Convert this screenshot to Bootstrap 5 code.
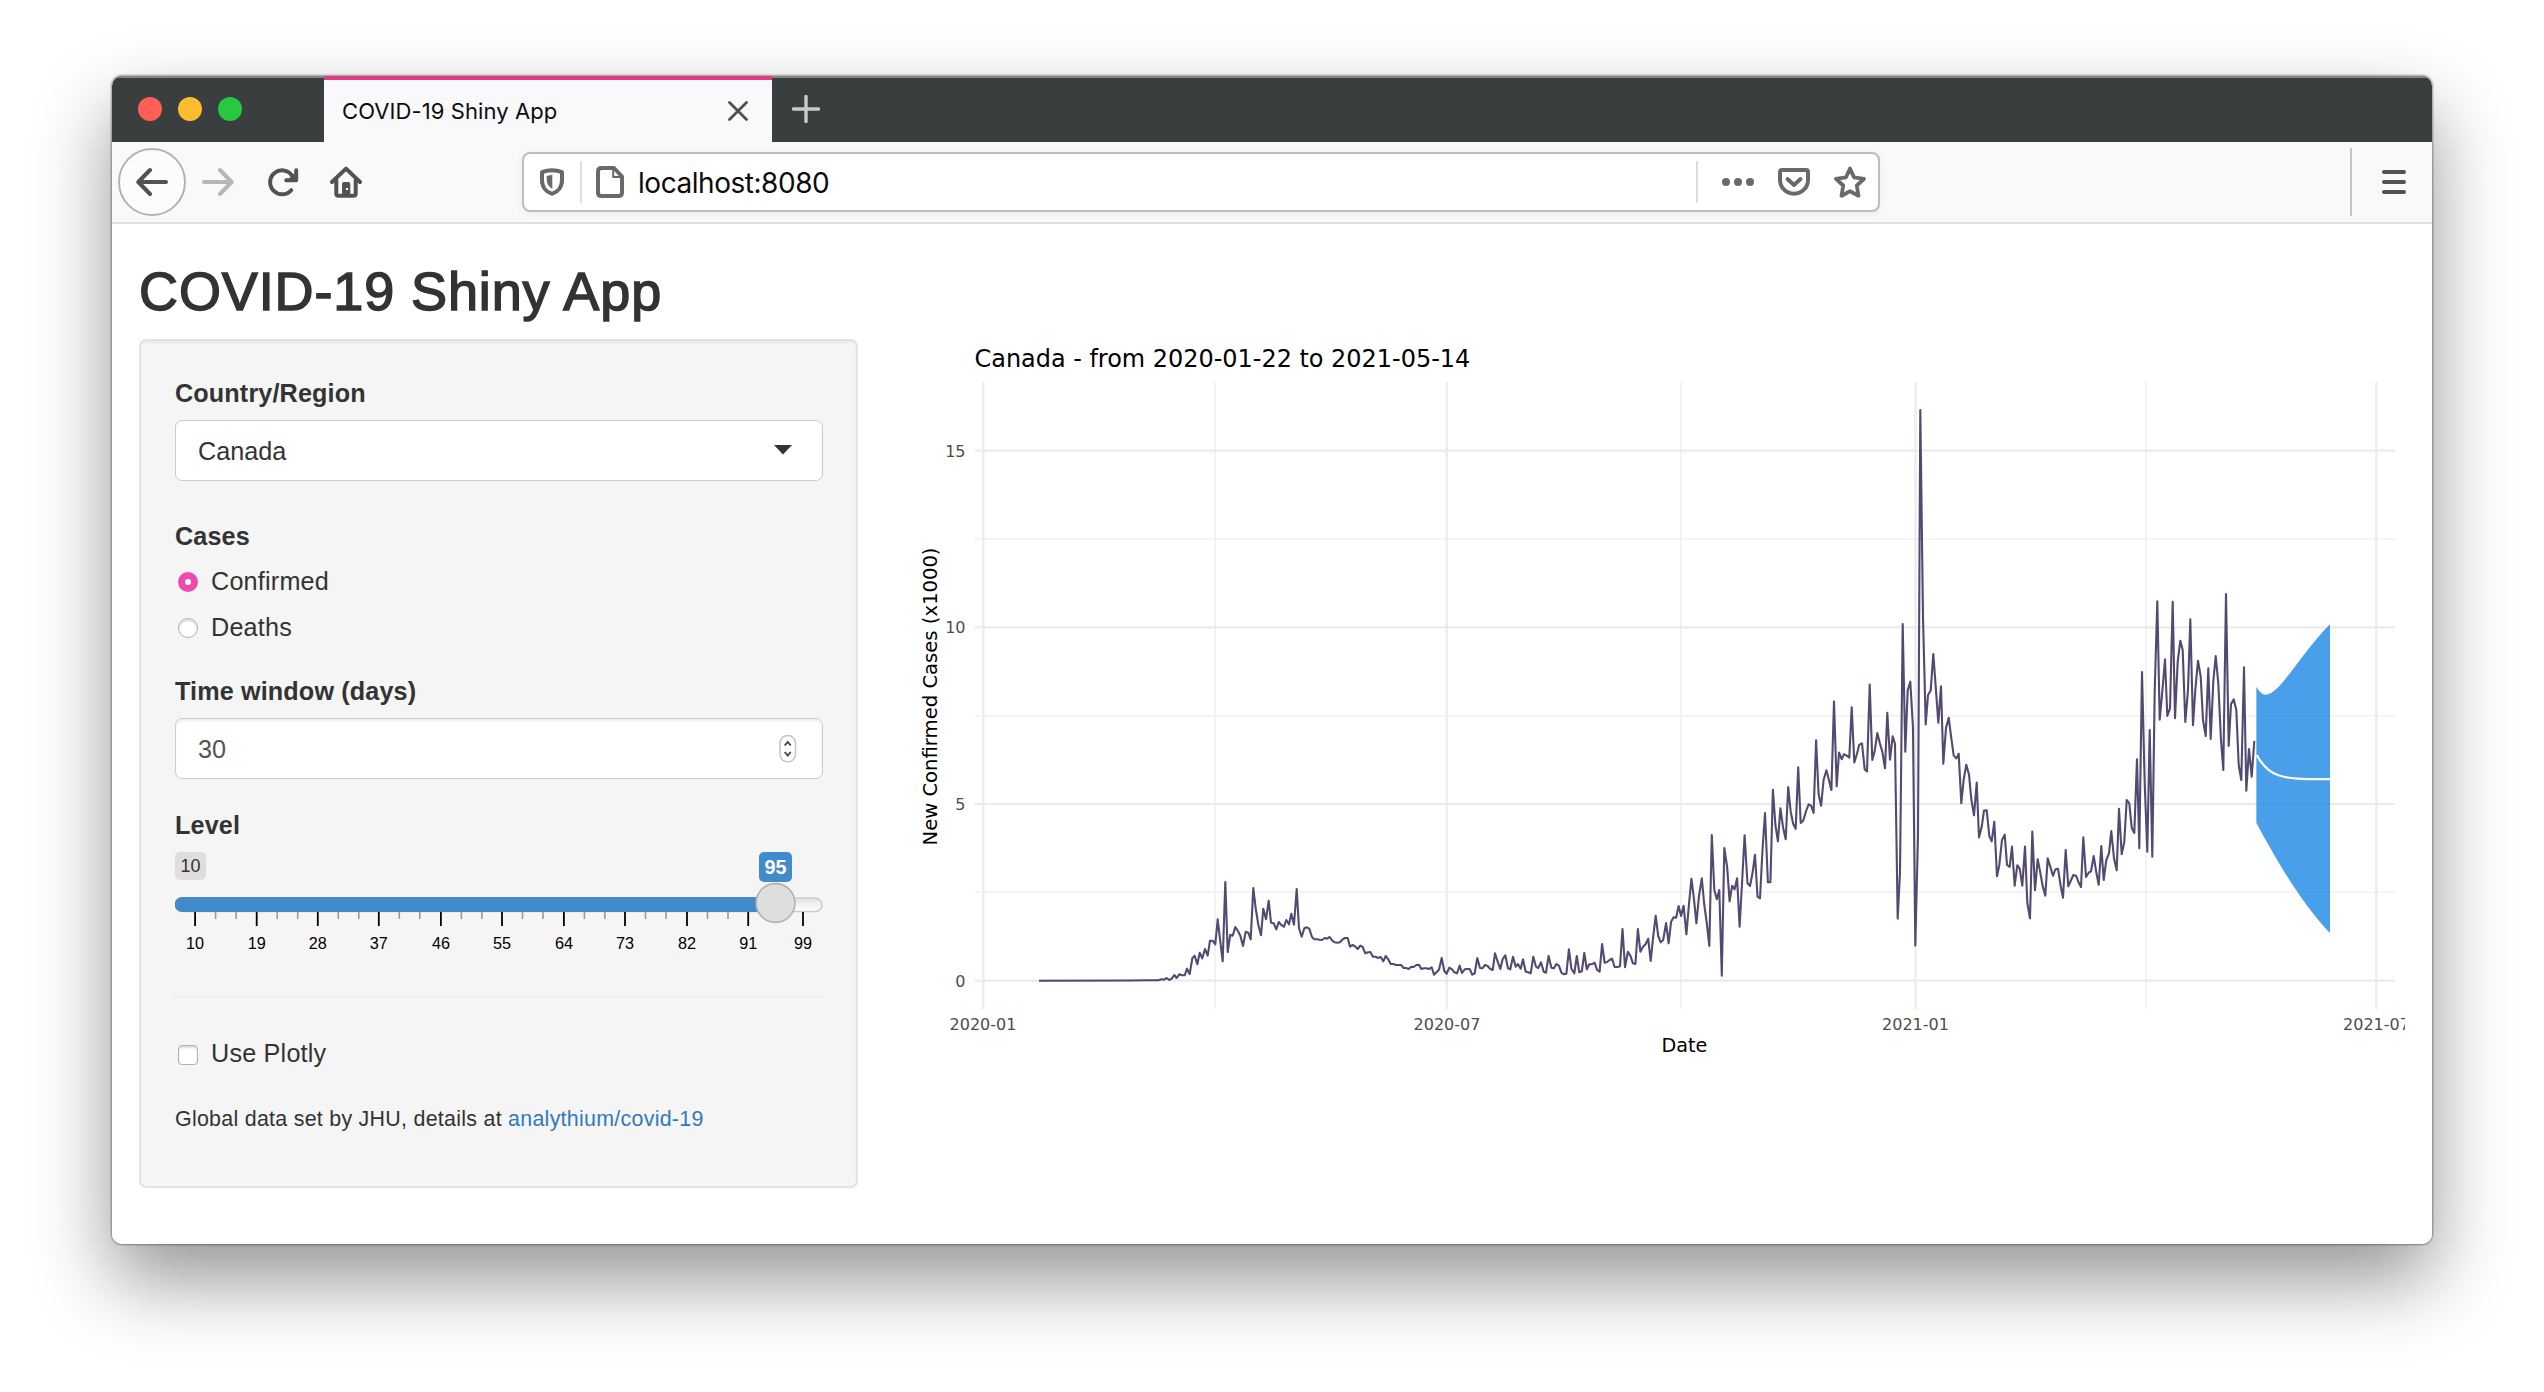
<!DOCTYPE html>
<html lang="en">
<head>
<meta charset="utf-8">
<title>COVID-19 Shiny App</title>
<link rel="stylesheet" href="https://cdn.jsdelivr.net/npm/bootstrap@5.3.0/dist/css/bootstrap.min.css">
<style>
body{background:#fff;padding:76px 112px 148px;height:1392px;overflow:hidden;font-family:"Liberation Sans",Arial,sans-serif;font-size:25.2px;line-height:36px;color:#333}
svg{display:block;flex:none}
.browser{height:1168px;border-radius:10px;overflow:hidden;background:#fff}
.browser-shadow{border-radius:10px;box-shadow:0 0 2px 1px rgba(0,0,0,.36),0 36px 78px rgba(0,0,0,.42)}
.tabstrip{height:66px;background:#3b3e3f;box-shadow:inset 0 2px 0 #84888a}
.lights{width:211px;padding-left:26px;gap:16px}
.light{width:24px;height:24px;border-radius:50%}
.tab-on{width:448px;margin-left:1px;background:#f9f9fb;border-top:4px solid #df3b86;padding:0 24px 0 18px;font:22px/62px Inter,sans-serif;color:#0c0c0d}
.tab-on span{letter-spacing:.08px}
.toolbar{height:82px;background:#f9f9fb;border-bottom:2px solid #e0e0e1;padding-left:6px}
.ico{fill:none;stroke:#525254;stroke-width:4;stroke-linecap:round;stroke-linejoin:round}
.back{width:68px;height:68px;border:2px solid #b3b3b4;border-radius:50%;background:#fcfcfd}
.urlbar{width:1358px;height:60px;margin-left:160px;background:#fff;border:2px solid #bcbcbd;border-radius:8px;box-shadow:0 2px 8px rgba(0,0,0,.06);padding:0 12px 0 16px;font:28px/56px Inter,sans-serif;color:#0c0c0d}
.urlbar .ico{stroke:#69696b}
.addr{margin-left:14px;padding-top:2px;letter-spacing:-.46px}
.vsep{width:2px;height:42px;background:#dededf}
.menu-edge{width:1.6px;height:68px;background:#c6c6c8}
.page{padding:37.6px 27px 0}
.app-title{font-size:54px;line-height:59.4px;margin:0 0 18px;font-weight:400;letter-spacing:.88px;-webkit-text-stroke:1.5px #333;color:#333}
.well-panel{width:719px;height:849px;background:#f5f5f5;border:2px solid #e3e3e3;border-radius:7px;box-shadow:inset 0 2px 2px rgba(0,0,0,.05);padding:34px 33px 0 34px}
.lbl{font-weight:700;display:block;height:36px;margin-bottom:9px;letter-spacing:.13px}
.field{height:61px;border:1.8px solid #ccc;border-radius:7px;background:#fff;padding:0 30px 0 22px}
.field.num{color:#555;box-shadow:inset 0 2px 2px rgba(0,0,0,.07);padding-right:25px;padding-top:1px}
.opt{height:36px;padding-left:3px;gap:13px;letter-spacing:.2px}
.opt .form-check-input{width:20px;height:20px;margin:1px 0 0;border:1.5px solid #b1b1b1;box-shadow:inset 0 2px 2px rgba(0,0,0,.14);flex:none}
.opt .form-check-input[type=checkbox]{border-radius:4px;margin-top:3px}
.opt .form-check-input:checked{background:#fff;border:7px solid #ee49ab;box-shadow:none}
.rule{height:2px;background:#eee;margin-top:36px}
.note{font-size:21.42px;line-height:30.6px;margin-top:33px;white-space:nowrap;letter-spacing:.27px}
.note a{color:#337ab7;text-decoration:none}
.plot{margin-left:42px;font-family:"DejaVu Sans",sans-serif}
.axis{font-size:16px;fill:#4d4d4d}
</style>
<script src="https://cdn.jsdelivr.net/npm/bootstrap@5.3.0/dist/js/bootstrap.bundle.min.js"></script>
</head>
<body>
<div class="browser-shadow">
<div class="browser d-flex flex-column">
  <div class="tabstrip d-flex">
    <div class="lights d-flex align-items-center">
      <span class="light" style="background:#ff5f57"></span><span class="light" style="background:#febc2e"></span><span class="light" style="background:#28c840"></span>
    </div>
    <div class="tab-on d-flex align-items-center justify-content-between">
      <span>COVID-19 Shiny App</span>
      <svg width="20" height="20" viewBox="0 0 20 20"><path d="M1.5 1.500L18.500 18.500M18.500 1.500L1.500 18.500" stroke="#4f4f51" stroke-width="2.800" stroke-linecap="round"/></svg>
    </div>
    <div class="d-flex align-items-center ps-3 ms-1"><svg width="28" height="28" viewBox="0 0 28 28"><path d="M14 1.500V26.500M1.500 14H26.500" stroke="#c9caca" stroke-width="3.400" stroke-linecap="round"/></svg></div>
  </div>
  <div class="toolbar d-flex align-items-center">
    <div class="back d-flex align-items-center justify-content-center"><svg class="ico" width="32" height="32"><path d="M30 16H3M14 4L2.300 16L14 28"/></svg></div>
    <svg class="ico" style="stroke:#b7b7b9;margin-left:16px" width="32" height="32"><path d="M2 16H29M18 4L29.700 16L18 28"/></svg>
    <svg class="ico" style="margin-left:32px;overflow:visible" width="32" height="32"><path d="M25.200 24.200A12 12 0 1 1 26 9.500M30.200 4.200V14.200H20.200"/><path d="M30 7V14H22Z" fill="#525254" stroke-width="1"/></svg>
    <svg class="ico" style="margin-left:32px" width="32" height="32"><path d="M2 16L16 2.600L30 16M6.300 14V27.500Q6.300 29.700 8.500 29.700H23.500Q25.700 29.700 25.700 27.500V14"/><path d="M12 29V18Q12 16 14 16H18.300Q20.300 16 20.300 18V29Z" fill="#525254" stroke="none"/><rect x="16" y="22" width="2" height="2" fill="#f9f9fb" stroke="none"/></svg>
    <div class="urlbar d-flex align-items-center">
      <svg class="ico" width="24" height="32"><path d="M2 6.200Q12 2.200 22 6.200V14C22 21 18 26 12 27.800C6 26 2 21 2 14Z"/><path d="M12.300 8.700V23C9 21 6.700 18 6.700 14V10Z" fill="#69696b" stroke="none"/></svg>
      <div class="vsep" style="margin-left:16px"></div>
      <svg class="ico" style="margin-left:14px" width="28" height="32"><path d="M5.500 2H18L26 10.500V26.500Q26 30 22.500 30H5.500Q2 30 2 26.500V5.500Q2 2 5.500 2Z"/><path d="M17.200 4V11H25" stroke-width="2"/></svg>
      <span class="addr">localhost:8080</span>
      <div class="vsep ms-auto"></div>
      <svg style="margin-left:24px" width="32" height="32" fill="#69696b"><circle cx="4" cy="16" r="4"/><circle cx="16" cy="16" r="4"/><circle cx="28" cy="16" r="4"/></svg>
      <svg class="ico" style="margin-left:24px" width="32" height="32"><path d="M4 4H28Q30 4 30 6V14A14 13.700 0 0 1 2 14V6Q2 4 4 4Z"/><path d="M9.500 13L16 19L22.500 13"/></svg>
      <svg class="ico" style="margin-left:24px" width="32" height="32"><path stroke-width="3.800" d="M16 2.500L20 11.300L30 12.800L22.800 19.500L24.500 29.700L16 25.300L7.500 29.700L9.200 19.500L2 12.800L12 11.300Z"/></svg>
    </div>
    <div class="menu-edge ms-auto"></div>
    <svg class="ico" style="margin:0 26px 0 30px" width="24" height="32"><path d="M2 6H22M2 16H22M2 26H22"/></svg>
  </div>

  <main class="page">
    <h2 class="app-title">COVID-19 Shiny App</h2>
    <div class="d-flex align-items-start">
      <form class="well-panel">
        <label class="lbl">Country/Region</label>
        <div class="field d-flex align-items-center justify-content-between" style="margin-bottom:37px"><span>Canada</span><svg width="18" height="10" style="margin-bottom:2px"><path d="M0 0H18L9 9.500Z" fill="#333"/></svg></div>
        <label class="lbl">Cases</label>
        <label class="opt d-flex align-items-center"><input class="form-check-input" type="radio" name="cases" checked>Confirmed</label>
        <label class="opt d-flex align-items-center" style="margin-top:10px"><input class="form-check-input" type="radio" name="cases">Deaths</label>
        <label class="lbl" style="margin-top:28px">Time window (days)</label>
        <div class="field num d-flex align-items-center justify-content-between"><span>30</span><svg width="18" height="30"><rect x="1" y="1.500" width="15.500" height="26.500" rx="7.700" fill="#fff" stroke="#c4c4c4" stroke-width="1.500"/><path d="M5.700 11.500L8.700 8L11.700 11.500M5.700 18L8.700 21.500L11.700 18" fill="none" stroke="#444" stroke-width="1.900"/></svg></div>
        <label class="lbl" style="margin-top:28px">Level</label>
        <svg width="648" height="108" viewBox="175 852 648 108" font-family="Liberation Sans,sans-serif">
          <defs><linearGradient id="trk" x2="0" y2="1"><stop offset="0" stop-color="#e2e2e2"/><stop offset="1" stop-color="#fff"/></linearGradient></defs>
          <rect x="175" y="852" width="31" height="28" rx="5" fill="#dedede"/><text x="190.500" y="872" font-size="18" text-anchor="middle" fill="#333">10</text>
          <rect x="176" y="898" width="646" height="13.500" rx="6.700" fill="url(#trk)" stroke="#ccc" stroke-width="1.600"/>
          <path d="M182 897H775V912H182A7.500 7.500 0 0 1 182 897Z" fill="#428bca"/>
          <g id="ticks"></g>
          <rect x="759" y="852" width="33" height="30" rx="5" fill="#428bca"/><text x="775.500" y="874.300" font-size="19.800" font-weight="700" text-anchor="middle" fill="#fff">95</text>
          <circle cx="775.500" cy="903" r="19.400" fill="#dedede" stroke="#b0b0b0" stroke-width="1.600"/>
        </svg>
        <div class="rule"></div>
        <label class="opt d-flex align-items-center" style="margin-top:37px"><input class="form-check-input" type="checkbox">Use Plotly</label>
        <p class="note mb-0">Global data set by JHU, details at <a href="#">analythium/covid-19</a></p>
      </form>
      <svg class="plot" width="1505" height="740" viewBox="900 339 1505 740">
        <text x="974.500" y="366.800" font-size="23.950">Canada - from 2020-01-22 to 2021-05-14</text>
        <g stroke="#f1f1f1" stroke-width="1.600"><path d="M974.600 892.300H2395M974.600 715.700H2395M974.600 539H2395M1215 382V1009M1681 382V1009M2146 382V1009"/></g>
        <g stroke="#ebebeb" stroke-width="2.200"><path d="M974.600 980.700H2395M974.600 804H2395M974.600 627.400H2395M974.600 450.700H2395M983.300 382V1009M1446.700 382V1009M1915.500 382V1009M2376.300 382V1009"/></g>
        <path id="cases-line" fill="none" stroke="#463b66" stroke-opacity=".93" stroke-width="2.100" stroke-linejoin="round"/>
        <g transform="translate(2060 560) scale(.33333)">
          <path fill="#037ae2" fill-opacity=".72" d="M589 381C602 400 610 405 618 404C640 402 660 378 690 340C730 288 765 237 810 193V1119C740 1046 670 940 589 788Z"/>
          <path fill="none" stroke="#fff" stroke-width="6.500" d="M590 585C605 612 628 637 655 646C690 658 740 657 810 657.500"/>
        </g>
        <g class="axis" text-anchor="end"><text x="965.500" y="986.600">0</text><text x="965.500" y="810">5</text><text x="965.500" y="633.300">10</text><text x="965.500" y="456.600">15</text></g>
        <g class="axis" text-anchor="middle"><text x="983" y="1030">2020-01</text><text x="1447" y="1030">2020-07</text><text x="1915.500" y="1030">2021-01</text><text x="2376.500" y="1030">2021-07</text></g>
        <text x="1684.500" y="1051.700" font-size="19.200" text-anchor="middle">Date</text>
        <text transform="translate(937 696.500) rotate(-90)" font-size="19.600" text-anchor="middle">New Confirmed Cases (x1000)</text>
      </svg>
    </div>
  </main>
</div>
</div>
<script>
// Slider scale: labelled major ticks with two minor ticks between each pair
const stops=[195.1,256.700,317.800,378.800,440.900,502,563.900,625,687,748.200,803],names=[10,19,28,37,46,55,64,73,82,91,99];
let t='';
stops.forEach((x,i)=>{
  t+=`<path d="M${x} 912V926" stroke="#000" stroke-width="1.800"/><text x="${x}" y="949" font-size="16.200" text-anchor="middle" fill="#000">${names[i]}</text>`;
  if(i<9)for(const k of[20.500,41])t+=`<path d="M${x+k} 912V919" stroke="#999" stroke-width="1.600"/>`;
});
document.getElementById('ticks').innerHTML=t;
// Daily case series; each block holds its own origin and scale
const blocks=[
[1130,850,3,3,`-273,392 0,391.5 50,391 85,391 95,388 102,389 110,384 118,390 125,386 133,375 140,384 148,373 156,376 164,376 171,356 179,372 187,325 194,317 202,343 209,308 217,325 225,297 233,317 240,272 248,272 256,283 263,208 271,275 278,334 286,96 293,306 301,254 308,257 316,231 324,243 331,257 339,288 347,245 355,248 362,268 370,114 377,175 385,224 393,256 400,176 408,208 416,152 423,218 431,220 439,238 446,216 454,225 462,230 469,210 477,223 484,191 492,224 500,117 507,235 515,260 523,235 530,232 538,236 546,261 553,268 561,268 568,269 576,270 584,264 591,266 599,261 607,272 614,277 622,278 630,277 637,269 645,264 653,264 660,290 668,285 675,289 683,297 691,287 698,291 706,310 714,307 721,306 729,320 737,320 744,324 752,321 760,334 767,318 775,328 782,342 790,342 798,345 805,345 813,345 821,354 828,354 836,357 844,350 851,351 859,345 867,344 874,357 882,355 889,355 897,357 905,352 912,374 920,366 927,359 935,324 943,363 950,371 958,353 966,358 973,367 981,370 989,347 996,369 1004,358 1011,357 1019,357 1027,374 1034,370 1042,324 1050,354 1057,355 1065,345 1073,348 1080,356 1088,360 1095,310 1103,335 1111,357 1118,327 1126,316 1134,355 1141,358 1149,320 1157,350 1164,342 1172,356 1179,328 1187,365 1195,367 1202,370 1210,320 1218,350 1225,354 1233,337 1241,365 1248,368`],
[1400,700,2.8,3,`416,768 424,803 431,805 438,792 445,797 452,818 459,823 466,821 473,748 480,806 488,820 495,768 502,817 509,814 516,759 523,808 530,793 537,793 545,788 552,810 559,815 566,732 573,788 580,786 587,780 594,776 601,801 609,801 616,799 623,687 630,802 638,755 645,767 652,790 659,792 666,687 673,755 680,741 688,732 695,716 702,783 709,710 716,647 723,708 730,727 737,720 745,669 752,730 759,665 766,652 773,653 780,618 787,648 794,617 802,703 809,615 816,536 823,595 830,670 837,590 845,535 852,615 859,670 866,738 873,405 880,570 887,598 894,570 901,827 908,444 916,500 923,604 930,557 937,568 944,535 951,680 958,545 965,406 973,550 980,558 987,520 994,464 1001,590 1008,595 1015,450 1022,339 1030,547 1037,547 1044,269 1051,375 1058,424 1065,325 1073,385 1080,418 1087,261 1094,335 1101,372 1108,386 1115,202 1122,369 1129,362 1137,333 1144,313 1151,317 1158,339 1165,121 1172,282 1179,317 1186,240 1194,211 1201,240 1208,270`],
[1680,380,3,2.529,`462,813 470,1027 477,942 485,959 492,946 500,950 508,955 515,828 523,967 531,945 538,922 546,919 554,985 561,990 569,770 577,961 584,938 592,893 600,920 607,940 615,982 622,842 630,960 638,901 645,920 653,1362 660,1245 668,617 676,940 683,785 691,763 699,880 706,1430 714,1150 721,76 729,600 737,871 744,797 752,785 760,693 767,775 775,867 783,775 790,970 798,880 806,854 813,900 821,950 829,957 836,945 844,1070 851,1010 859,973 867,998 874,1060 882,1101 890,1018 897,1157 905,1130 912,1089 920,1088 928,1153 935,1167 943,1117 951,1255 958,1227 966,1163 974,1150 981,1226 989,1231 996,1180 1004,1279 1012,1227 1019,1236 1027,1279 1035,1180 1042,1322 1050,1361 1057,1142 1065,1290 1073,1212 1080,1242 1088,1280 1096,1304 1103,1210 1111,1231 1119,1254 1126,1238 1134,1236 1142,1280`],
[2060,560,3,3,`9,1013 17,870 25,979 32,963 40,945 48,947 55,965 63,981 70,832 78,951 86,938 93,934 101,888 109,937 116,974 124,858 131,960 139,900 147,880 154,813 162,895 170,931 177,746 185,883 193,845 200,720 208,730 215,803 223,819 231,598 238,865 246,336 254,670 262,875 269,510 277,890 284,395 292,124 299,479 307,395 315,298 322,468 330,445 338,125 345,475 353,305 361,242 368,270 376,486 384,390 391,178 399,496 406,390 414,302 422,350 429,480 437,528 445,325 452,537 460,365 467,288 475,370 483,540 490,630 498,102 506,558 513,433 521,418 529,450 536,615 544,660 552,322 559,692 567,567 575,650 583,543`]];
const pts=blocks.flatMap(([ox,oy,sx,sy,s])=>s.split(' ').map(p=>{const[x,y]=p.split(',').map(Number);return(ox+x/sx).toFixed(1)+' '+(oy+y/sy).toFixed(1)}));
document.getElementById('cases-line').setAttribute('d','M'+pts.join('L'));
</script>
</body>
</html>
